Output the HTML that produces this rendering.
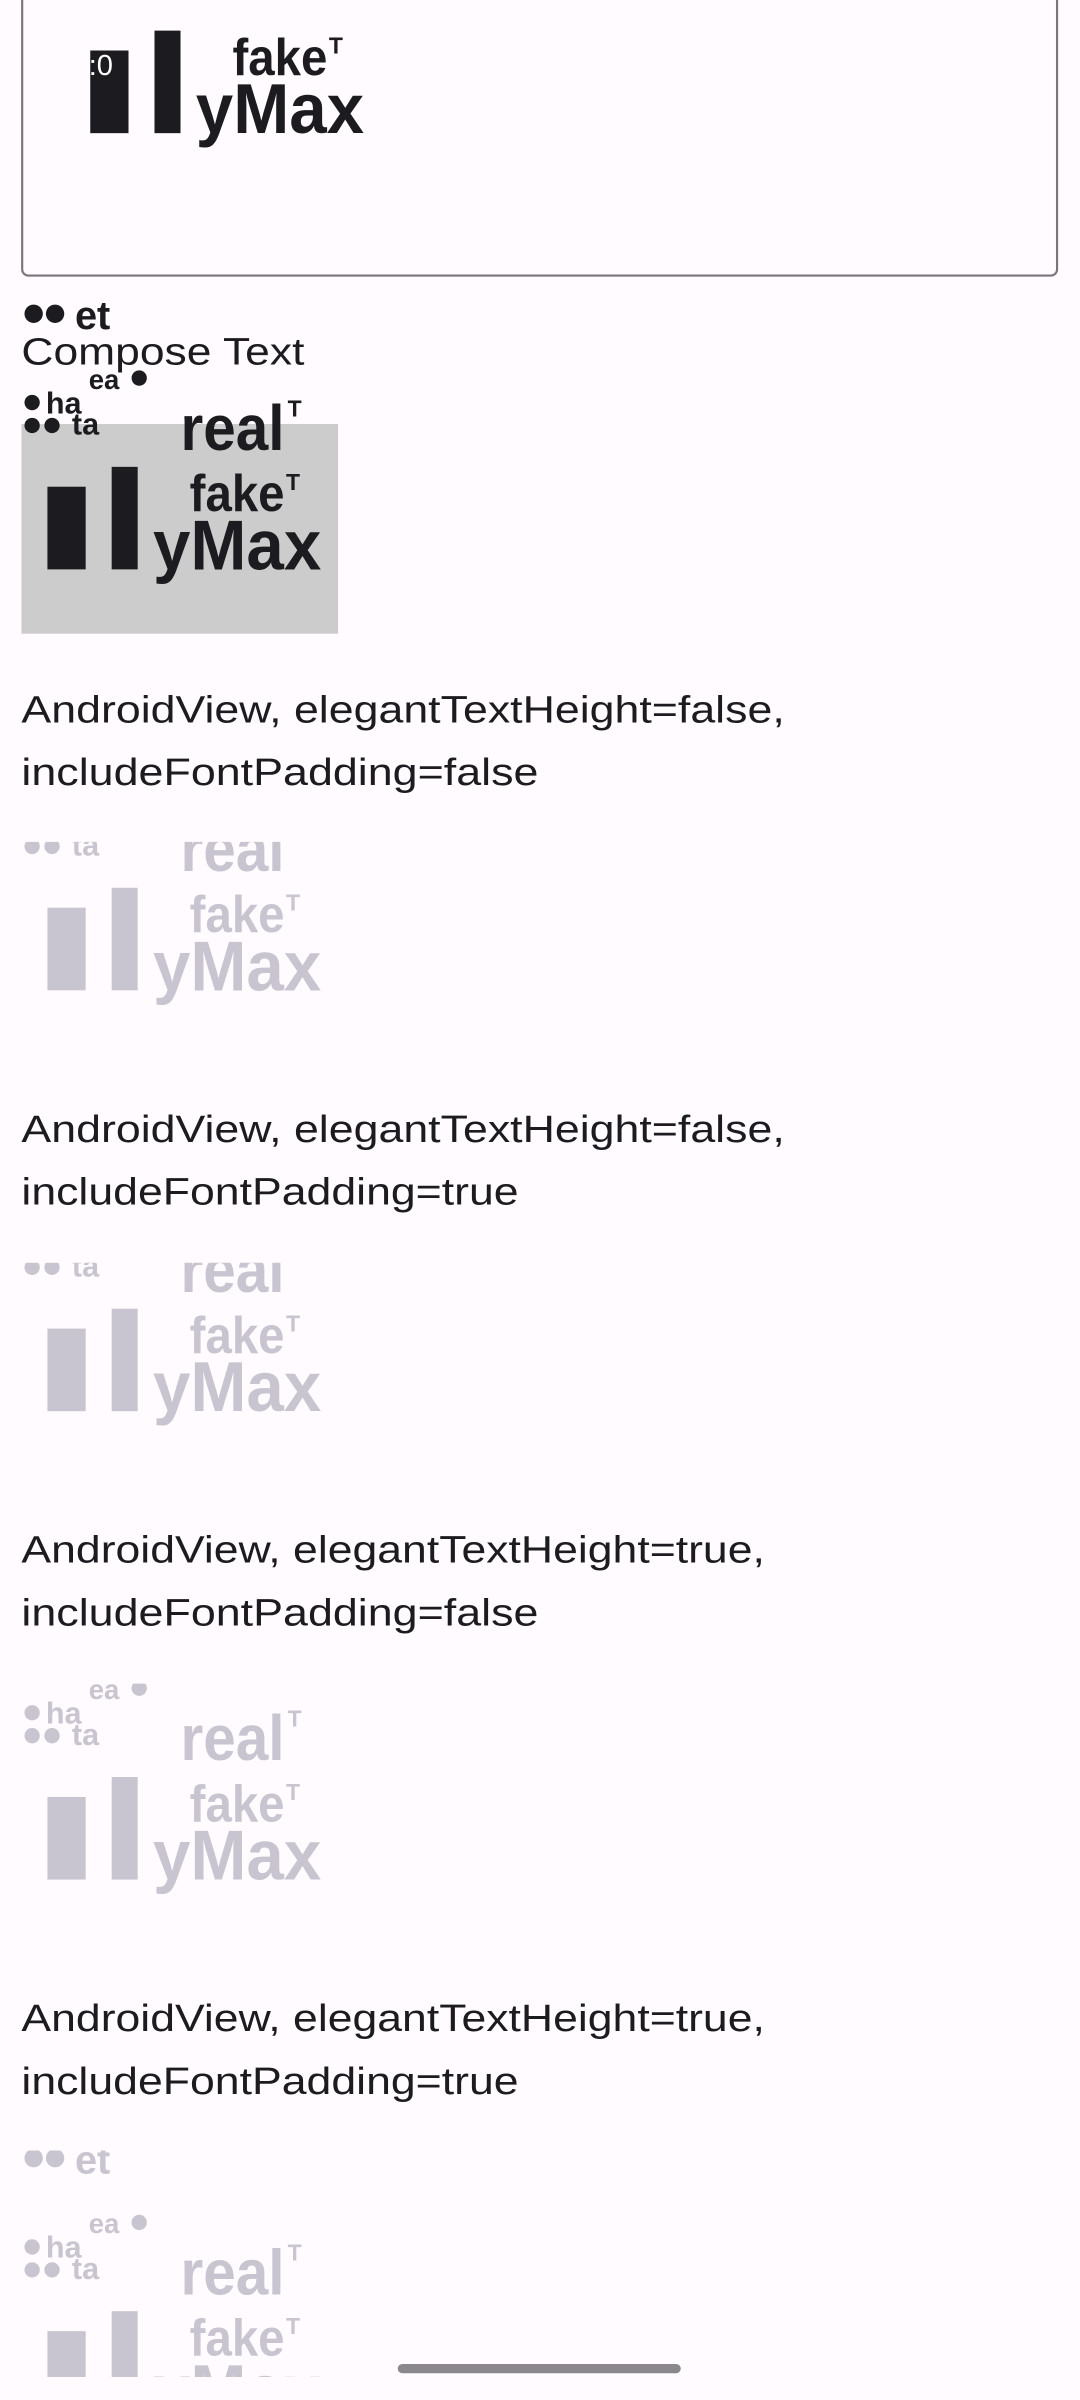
<!DOCTYPE html>
<html><head><meta charset="utf-8"><style>
html,body{margin:0;padding:0;background:#fffbfe;}
body{width:1080px;height:2400px;overflow:hidden;}
svg{display:block}
text{font-family:"Liberation Sans",sans-serif;}
.b{font-weight:bold}
.lbl{font-size:25px;fill:#1c1b1f}
</style></head><body>
<svg width="1080" height="2400" viewBox="0 0 706 1568" preserveAspectRatio="none" xmlns="http://www.w3.org/2000/svg">
<defs>
<clipPath id="c0"><rect x="15" y="17" width="675" height="162"/></clipPath>
<clipPath id="c2"><rect x="0" y="550" width="706" height="120"/></clipPath>
<clipPath id="c3"><rect x="0" y="825" width="706" height="120"/></clipPath>
<clipPath id="c4"><rect x="0" y="1100" width="706" height="150"/></clipPath>
<clipPath id="c5"><rect x="0" y="1405" width="706" height="148"/></clipPath>
</defs>
<rect width="706" height="1568" fill="#fffbfe"/>

<rect x="14.5" y="-10" width="676.5" height="190" rx="4" fill="none" stroke="#79747e" stroke-width="1.4"/>
<g clip-path="url(#c0)" fill="#1c1b1f">
<g transform="translate(28,-95)">
<rect x="31" y="128" width="25" height="54"/><rect x="73" y="115" width="17" height="67"/>
<text class="b" x="124" y="144" font-size="34" textLength="62" lengthAdjust="spacingAndGlyphs">fake</text><text class="b" x="187" y="130" font-size="15">T</text>
<text class="b" x="100" y="182" font-size="46" textLength="110" lengthAdjust="spacingAndGlyphs">yMax</text>
</g>
<text x="58" y="49" font-size="19" fill="#fff">:0</text>
</g>

<rect x="14" y="277" width="207" height="137" fill="#cccccc"/>
<text x="14" y="238" font-size="25" fill="#1c1b1f" textLength="185" lengthAdjust="spacingAndGlyphs">Compose Text</text>
<g transform="translate(0,190)" fill="#1c1b1f">
<circle cx="22" cy="15" r="6"/><circle cx="36" cy="15" r="6"/><text class="b" x="49" y="25" font-size="26">et</text>
<text class="b" x="58" y="64" font-size="18">ea</text><circle cx="91" cy="57" r="5"/>
<circle cx="21" cy="73" r="5"/><text class="b" x="30" y="80" font-size="20">ha</text>
<circle cx="21" cy="88" r="5"/><circle cx="34" cy="88" r="5"/><text class="b" x="47" y="94" font-size="20">ta</text>
<text class="b" x="118" y="104" font-size="42" textLength="68" lengthAdjust="spacingAndGlyphs">real</text><text class="b" x="188" y="82" font-size="15">T</text>
<rect x="31" y="128" width="25" height="54"/><rect x="73" y="115" width="17" height="67"/>
<text class="b" x="124" y="144" font-size="34" textLength="62" lengthAdjust="spacingAndGlyphs">fake</text><text class="b" x="187" y="130" font-size="15">T</text>
<text class="b" x="100" y="182" font-size="46" textLength="110" lengthAdjust="spacingAndGlyphs">yMax</text>
</g>

<text class="lbl" x="14" y="472" textLength="499" lengthAdjust="spacingAndGlyphs">AndroidView, elegantTextHeight=false,</text>
<text class="lbl" x="14" y="513" textLength="338" lengthAdjust="spacingAndGlyphs">includeFontPadding=false</text>
<text class="lbl" x="14" y="746" textLength="499" lengthAdjust="spacingAndGlyphs">AndroidView, elegantTextHeight=false,</text>
<text class="lbl" x="14" y="787" textLength="325" lengthAdjust="spacingAndGlyphs">includeFontPadding=true</text>
<text class="lbl" x="14" y="1021" textLength="486" lengthAdjust="spacingAndGlyphs">AndroidView, elegantTextHeight=true,</text>
<text class="lbl" x="14" y="1062" textLength="338" lengthAdjust="spacingAndGlyphs">includeFontPadding=false</text>
<text class="lbl" x="14" y="1327" textLength="486" lengthAdjust="spacingAndGlyphs">AndroidView, elegantTextHeight=true,</text>
<text class="lbl" x="14" y="1368" textLength="325" lengthAdjust="spacingAndGlyphs">includeFontPadding=true</text>

<g clip-path="url(#c2)"><g transform="translate(0,465)" fill="#c9c5d0">
<circle cx="21" cy="88" r="5"/><circle cx="34" cy="88" r="5"/><text class="b" x="47" y="94" font-size="20">ta</text>
<text class="b" x="118" y="104" font-size="42" textLength="68" lengthAdjust="spacingAndGlyphs">real</text>
<rect x="31" y="128" width="25" height="54"/><rect x="73" y="115" width="17" height="67"/>
<text class="b" x="124" y="144" font-size="34" textLength="62" lengthAdjust="spacingAndGlyphs">fake</text><text class="b" x="187" y="130" font-size="15">T</text>
<text class="b" x="100" y="182" font-size="46" textLength="110" lengthAdjust="spacingAndGlyphs">yMax</text>
</g></g>

<g clip-path="url(#c3)"><g transform="translate(0,740)" fill="#c9c5d0">
<circle cx="21" cy="88" r="5"/><circle cx="34" cy="88" r="5"/><text class="b" x="47" y="94" font-size="20">ta</text>
<text class="b" x="118" y="104" font-size="42" textLength="68" lengthAdjust="spacingAndGlyphs">real</text>
<rect x="31" y="128" width="25" height="54"/><rect x="73" y="115" width="17" height="67"/>
<text class="b" x="124" y="144" font-size="34" textLength="62" lengthAdjust="spacingAndGlyphs">fake</text><text class="b" x="187" y="130" font-size="15">T</text>
<text class="b" x="100" y="182" font-size="46" textLength="110" lengthAdjust="spacingAndGlyphs">yMax</text>
</g></g>

<g clip-path="url(#c4)"><g transform="translate(0,1046)" fill="#c9c5d0">
<text class="b" x="58" y="64" font-size="18">ea</text><circle cx="91" cy="57" r="5"/>
<circle cx="21" cy="73" r="5"/><text class="b" x="30" y="80" font-size="20">ha</text>
<circle cx="21" cy="88" r="5"/><circle cx="34" cy="88" r="5"/><text class="b" x="47" y="94" font-size="20">ta</text>
<text class="b" x="118" y="104" font-size="42" textLength="68" lengthAdjust="spacingAndGlyphs">real</text><text class="b" x="188" y="82" font-size="15">T</text>
<rect x="31" y="128" width="25" height="54"/><rect x="73" y="115" width="17" height="67"/>
<text class="b" x="124" y="144" font-size="34" textLength="62" lengthAdjust="spacingAndGlyphs">fake</text><text class="b" x="187" y="130" font-size="15">T</text>
<text class="b" x="100" y="182" font-size="46" textLength="110" lengthAdjust="spacingAndGlyphs">yMax</text>
</g></g>

<g clip-path="url(#c5)"><g transform="translate(0,1395)" fill="#c9c5d0">
<circle cx="22" cy="15" r="6"/><circle cx="36" cy="15" r="6"/><text class="b" x="49" y="25" font-size="26">et</text>
<text class="b" x="58" y="64" font-size="18">ea</text><circle cx="91" cy="57" r="5"/>
<circle cx="21" cy="73" r="5"/><text class="b" x="30" y="80" font-size="20">ha</text>
<circle cx="21" cy="88" r="5"/><circle cx="34" cy="88" r="5"/><text class="b" x="47" y="94" font-size="20">ta</text>
<text class="b" x="118" y="104" font-size="42" textLength="68" lengthAdjust="spacingAndGlyphs">real</text><text class="b" x="188" y="82" font-size="15">T</text>
<rect x="31" y="128" width="25" height="54"/><rect x="73" y="115" width="17" height="67"/>
<text class="b" x="124" y="144" font-size="34" textLength="62" lengthAdjust="spacingAndGlyphs">fake</text><text class="b" x="187" y="130" font-size="15">T</text>
<text class="b" x="100" y="182" font-size="46" textLength="110" lengthAdjust="spacingAndGlyphs">yMax</text>
</g></g>

<rect x="260" y="1544.5" width="185" height="6" rx="3" fill="#8a888c"/>
</svg>
</body></html>
